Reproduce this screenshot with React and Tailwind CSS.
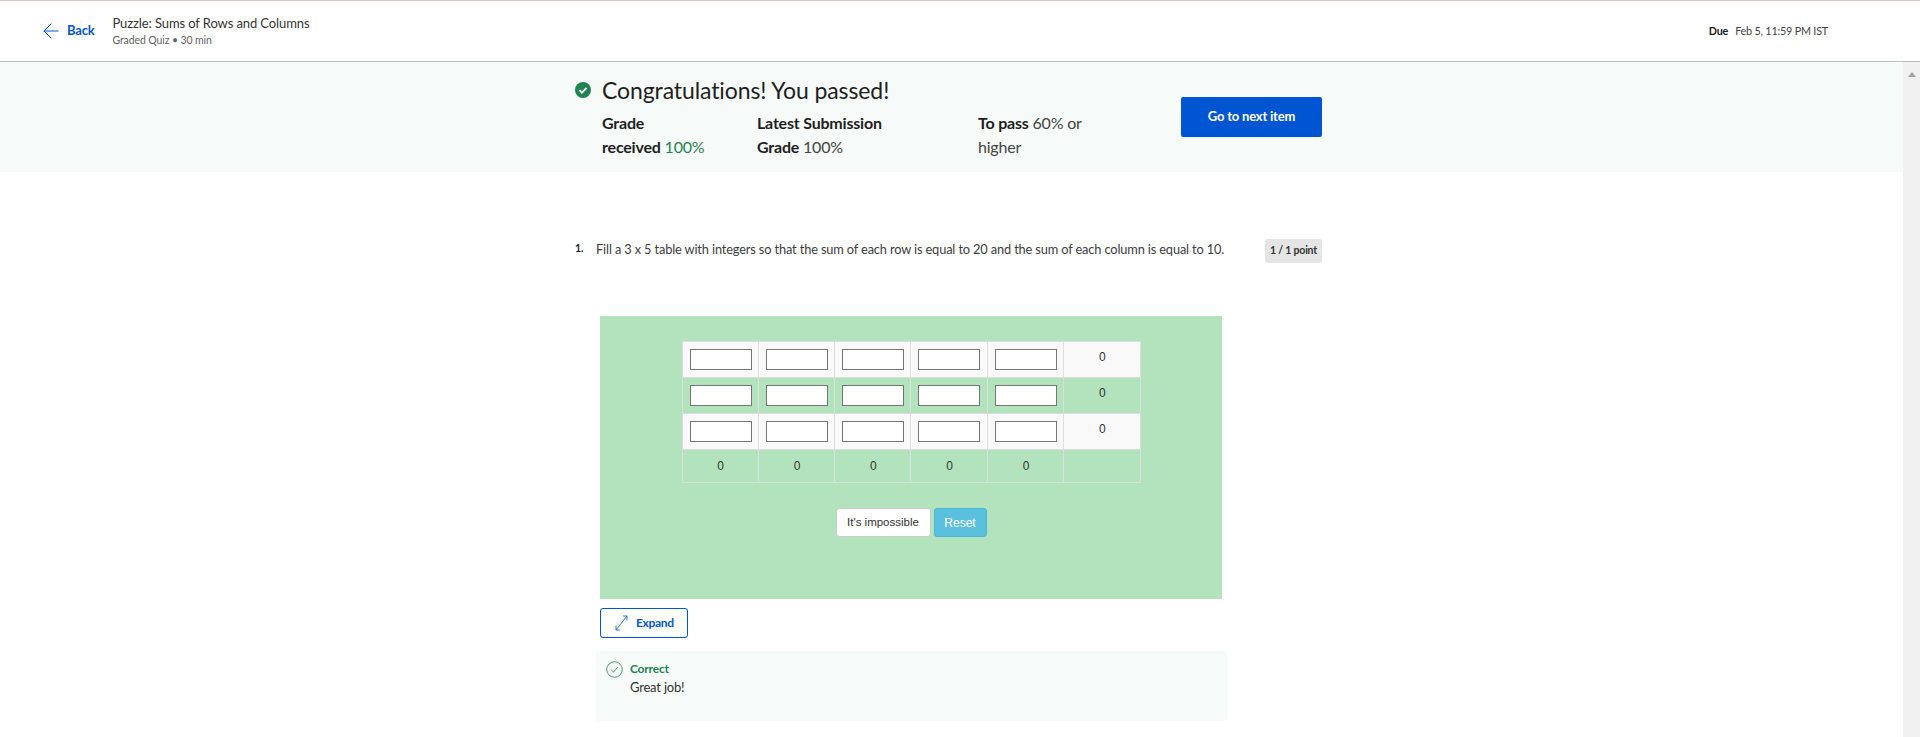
import React from 'react';
import { ArrowLeft } from 'lucide-react';

const sans = "font-['Lato','Noto_Sans',sans-serif]";

const CheckBadge = () => (
    <svg width="16" height="16" viewBox="0 0 16 16" className="shrink-0">
        <circle cx="8" cy="8" r="8" fill="#1f8354" />
        <path d="M4.5 8.2l2.4 2.4 4.6-4.8" fill="none" stroke="#fff" strokeWidth="1.8" />
    </svg>
);

const ExpandIcon = () => (
    <svg width="13" height="16" viewBox="0 0 13 16" fill="none" stroke="#0056d2" strokeWidth="0.8">
        <path d="M1 15L12 1M8 1H12V5.5M1 10.5V15H5" />
    </svg>
);

const CorrectIcon = () => (
    <svg width="17" height="17" viewBox="0 0 17 17" fill="none" stroke="#1f8354" strokeWidth="0.8">
        <circle cx="8.5" cy="8.5" r="7.8" />
        <path d="M5.2 8.8l2.3 2.3 4.3-5" />
    </svg>
);

const cols = [0, 1, 2, 3, 4];

const Cell = ({ children }) => (
    <td className="h-[36px] border border-[#dddddd] p-0 pt-[7px] pl-[1px] text-center align-top leading-[17px]">{children}</td>
);

const InputRow = ({ shaded }) => (
    <tr className={shaded ? 'bg-[#f9f9f9]' : ''}>
        {cols.map((c) => (
            <td key={c} className="h-[36px] border border-[#dddddd] p-0 align-middle">
                <div className="ml-[7px] h-[21px] w-[62px] border border-[#767676] bg-white" />
            </td>
        ))}
        <Cell>0</Cell>
    </tr>
);

const App = () => {
    return (
        <div className={`flex h-[737px] w-[1920px] flex-col overflow-hidden bg-white text-[#1f1f1f] ${sans}`}>
            <header className="flex h-[62px] shrink-0 items-center border-t border-b border-t-[#d9c8c4] border-b-[#bdbdbd] pr-[92px] pl-[39px]">
                <ArrowLeft size={24} strokeWidth={1} className="text-[#0056d2]" />
                <span className="ml-[4px] text-[13px] font-bold tracking-[-0.2px] text-[#0056d2]">Back</span>
                <div className="ml-[18px] flex-1">
                    <div className="text-[13px] leading-[16px] tracking-[-0.1px] text-[#333333]">Puzzle: Sums of Rows and Columns</div>
                    <div className="mt-[2px] text-[10.5px] leading-[14px] tracking-[-0.1px] text-[#636363]">Graded Quiz • 30 min</div>
                </div>
                <div className="text-[10.8px] tracking-[-0.2px] text-[#444444]">
                    <span className="mr-[7px] font-bold text-[#1f1f1f]">Due</span>Feb 5, 11:59 PM IST
                </div>
            </header>

            <div className="flex min-h-0 flex-1">
                <main className="min-w-0 flex-1">
                    <section className="h-[110px] bg-[#f6faf8]">
                        <div className="mx-auto flex w-[747px] -translate-x-[3px] justify-between pt-[13px]">
                            <div>
                                <div className="flex items-center">
                                    <CheckBadge />
                                    <h1 className="ml-[11px] text-[23px] leading-[30px] tracking-[-0.1px] text-[#1f1f1f]">Congratulations! You passed!</h1>
                                </div>
                                <div className="mt-[6px] ml-[27px] flex text-[16px] leading-[24px] tracking-[-0.2px] text-[#444444]">
                                    <div className="w-[155px]">
                                        <div className="font-bold text-[#1f1f1f]">Grade</div>
                                        <div><b className="font-bold text-[#1f1f1f]">received</b> <span className="text-[#1f8354]">100%</span></div>
                                    </div>
                                    <div className="w-[221px]">
                                        <div className="font-bold text-[#1f1f1f]">Latest Submission</div>
                                        <div><b className="font-bold text-[#1f1f1f]">Grade</b> 100%</div>
                                    </div>
                                    <div className="w-[113px]">
                                        <div><b className="font-bold text-[#1f1f1f]">To pass</b> 60% or</div>
                                        <div>higher</div>
                                    </div>
                                </div>
                            </div>
                            <button className="mt-[22px] h-[40px] w-[141px] rounded-[2px] bg-[#0056d2] text-[13px] font-bold tracking-[-0.2px] text-white">Go to next item</button>
                        </div>
                    </section>

                    <div className="mx-auto w-[747px] -translate-x-[3px]">
                        <div className="flex items-start pt-[67px]">
                            <span className="w-[21px] pt-[2px] text-[10.5px] font-bold text-[#1f1f1f]">1.</span>
                            <p className="w-[640px] pt-[1px] text-[12.8px] tracking-[-0.14px] whitespace-nowrap text-[#3d3d3d]">Fill a 3 x 5 table with integers so that the sum of each row is equal to 20 and the sum of each column is equal to 10.</p>
                            <span className="ml-auto flex h-[24px] w-[57px] items-center justify-center rounded-[3px] bg-[#e5e5e5] text-[10.5px] font-bold tracking-[-0.2px] text-[#333333]">1 / 1 point</span>
                        </div>

                        <div className="mt-[53px] ml-[25px] flex h-[283px] w-[622px] flex-col items-center bg-[#b2e3bc] pt-[25px] font-['Liberation_Sans',sans-serif] text-[12px] text-[#333333]">
                            <table className="w-[459px] table-fixed border-collapse">
                                <tbody>
                                    <InputRow shaded />
                                    <InputRow />
                                    <InputRow shaded />
                                    <tr>
                                        {cols.map((c) => <td key={c} className="h-[33px] border border-[#dddddd] p-0 pb-[1px] pl-[1px] text-center">0</td>)}
                                        <td className="h-[33px] border border-[#dddddd] p-0" />
                                    </tr>
                                </tbody>
                            </table>
                            <div className="mt-[25px] flex gap-[3px]">
                                <button className="h-[29px] w-[95px] rounded-[3px] border border-[#cccccc] bg-white text-[11.5px] text-[#333333]">It's impossible</button>
                                <button className="h-[29px] w-[53px] rounded-[3px] border border-[#46b8da] bg-[#5bc0de] text-[12px] text-white">Reset</button>
                            </div>
                        </div>

                        <button className="mt-[9px] ml-[25px] flex h-[30px] w-[88px] items-center rounded-[3px] border border-[#0056d2] pl-[14px] text-[12px] font-bold tracking-[-0.3px] text-[#0056d2]">
                            <ExpandIcon />
                            <span className="ml-[8px]">Expand</span>
                        </button>

                        <div className="mt-[13px] ml-[21px] flex h-[70px] w-[631px] rounded-[3px] bg-[#f6faf8] pt-[10px] pl-[10px]">
                            <CorrectIcon />
                            <div className="ml-[7px]">
                                <div className="text-[12px] leading-[16px] font-bold tracking-[-0.2px] text-[#1f8354]">Correct</div>
                                <div className="mt-[2px] text-[13px] leading-[16px] tracking-[-0.2px] text-[#333333]">Great job!</div>
                            </div>
                        </div>
                    </div>
                </main>

                <div className="flex w-[17px] shrink-0 justify-center bg-[#f1f1f1] pt-[10px]">
                    <div className="h-0 w-0 border-x-[4.5px] border-b-[5px] border-x-transparent border-b-[#a3a3a3]" />
                </div>
            </div>
        </div>
    );
};

export default App;
